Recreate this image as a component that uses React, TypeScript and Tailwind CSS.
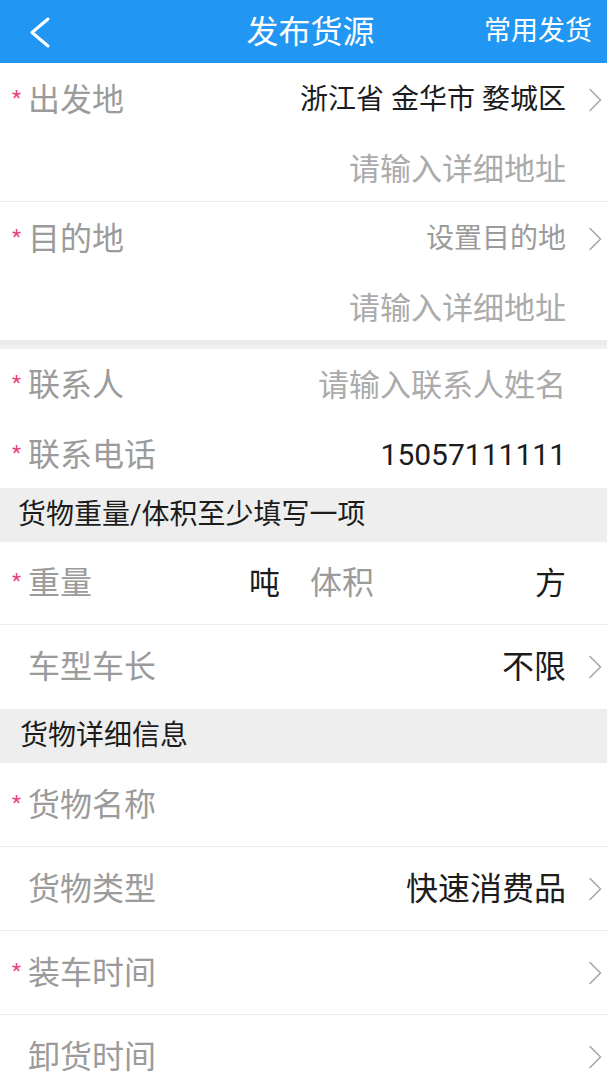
import React from 'react';

const font = { fontFamily: 'Roboto, "Noto Sans CJK SC", sans-serif' };

function Star({ show = true }: { show?: boolean }) {
  return (
    <span className={`w-[16px] self-start pt-[4px] text-[21px] leading-none text-[#ea3c78] ${show ? '' : 'invisible'}`}>
      *
    </span>
  );
}

function Chevron({ show = true }: { show?: boolean }) {
  return (
    <div className="w-[41px] flex items-center pl-[22px]">
      {show && (
        <svg width="14" height="24" viewBox="0 0 14 24" fill="none">
          <path d="M2 1.5L12.5 12L2 22.5" stroke="#a8a8a8" strokeWidth="1.6" strokeLinecap="round" strokeLinejoin="round" />
        </svg>
      )}
    </div>
  );
}

function Label({ text, required = false }: { text: string; required?: boolean }) {
  return (
    <div className="flex items-center">
      <Star show={required} />
      <span className="text-[32px] leading-none text-[#9b9b9b]">{text}</span>
    </div>
  );
}

function Row({
  label,
  required = false,
  value,
  valueClass = 'text-[32px] text-[#1c1c1c]',
  chevron = true,
  height = 'h-[84px]',
  border = true,
}: {
  label: string;
  required?: boolean;
  value?: string;
  valueClass?: string;
  chevron?: boolean;
  height?: string;
  border?: boolean;
}) {
  return (
    <div className={`${height} flex items-center pl-[12px] bg-white ${border ? 'border-b border-[#ececec]' : ''}`}>
      <Label text={label} required={required} />
      <div className="flex-1" />
      {value && <span className={`leading-none ${valueClass}`}>{value}</span>}
      <Chevron show={chevron} />
    </div>
  );
}

function AddressBlock({ label, value, valueClass }: { label: string; value: string; valueClass: string }) {
  return (
    <div className="bg-white border-b border-[#ececec]">
      <div className="h-[74px] flex items-center pl-[12px]">
        <Label text={label} required />
        <div className="flex-1" />
        <span className={`leading-none ${valueClass}`}>{value}</span>
        <Chevron />
      </div>
      <div className="h-[64px] flex items-center justify-end pr-[41px]">
        <span className="text-[31px] leading-none text-[#ababab]">请输入详细地址</span>
      </div>
    </div>
  );
}

function SectionHeader({ text, pl }: { text: string; pl: string }) {
  return (
    <div className={`h-[54px] flex items-center bg-[#eeeeee] ${pl}`}>
      <span className="text-[28px] leading-none text-[#1c1c1c]">{text}</span>
    </div>
  );
}

export default function App() {
  return (
    <div className="w-[607px] h-[1080px] overflow-hidden bg-white" style={font}>
      {/* Header */}
      <div className="h-[63px] bg-[#2196f3] flex items-center">
        <div className="w-[140px] flex-none pl-[28px] flex items-center">
          <svg width="24" height="32" viewBox="0 0 24 32" fill="none">
            <path d="M20 3L4 16.5L20 30" stroke="white" strokeWidth="3" strokeLinecap="round" strokeLinejoin="round" />
          </svg>
        </div>
        <div className="flex-1 flex justify-center">
          <span className="text-[32px] leading-none text-white pl-[14px] whitespace-nowrap">发布货源</span>
        </div>
        <div className="w-[140px] flex-none flex justify-end pr-[15px]">
          <span className="text-[27px] leading-none text-white whitespace-nowrap">常用发货</span>
        </div>
      </div>

      {/* Addresses */}
      <AddressBlock label="出发地" value="浙江省 金华市 婺城区" valueClass="text-[28px] text-[#1c1c1c]" />
      <AddressBlock label="目的地" value="设置目的地" valueClass="text-[28px] text-[#9b9b9b]" />
      <div className="h-[8px] bg-gradient-to-b from-[#e8e8e8] to-[#f3f3f3]" />

      {/* Contact */}
      <Row
        label="联系人"
        required
        value="请输入联系人姓名"
        valueClass="text-[31px] text-[#ababab]"
        chevron={false}
        height="h-[72px]"
        border={false}
      />
      <Row
        label="联系电话"
        required
        value="15057111111"
        valueClass="text-[30px] text-[#1c1c1c]"
        chevron={false}
        height="h-[67px]"
        border={false}
      />

      <SectionHeader text="货物重量/体积至少填写一项" pl="pl-[18px]" />

      {/* Weight / volume */}
      <div className="h-[83px] flex items-center pl-[12px] bg-white border-b border-[#ececec]">
        <div className="w-[268px] flex items-center">
          <Label text="重量" required />
          <div className="flex-1" />
          <span className="text-[31px] leading-none text-[#1c1c1c]">吨</span>
        </div>
        <div className="flex-1 flex items-center pl-[30px] pr-[41px]">
          <span className="text-[32px] leading-none text-[#9b9b9b]">体积</span>
          <div className="flex-1" />
          <span className="text-[31px] leading-none text-[#1c1c1c]">方</span>
        </div>
      </div>
      <Row label="车型车长" value="不限" height="h-[84px]" border={false} />

      <SectionHeader text="货物详细信息" pl="pl-[20px]" />

      {/* Goods */}
      <Row label="货物名称" required chevron={false} />
      <Row label="货物类型" value="快速消费品" />
      <Row label="装车时间" required />
      <Row label="卸货时间" />
    </div>
  );
}
